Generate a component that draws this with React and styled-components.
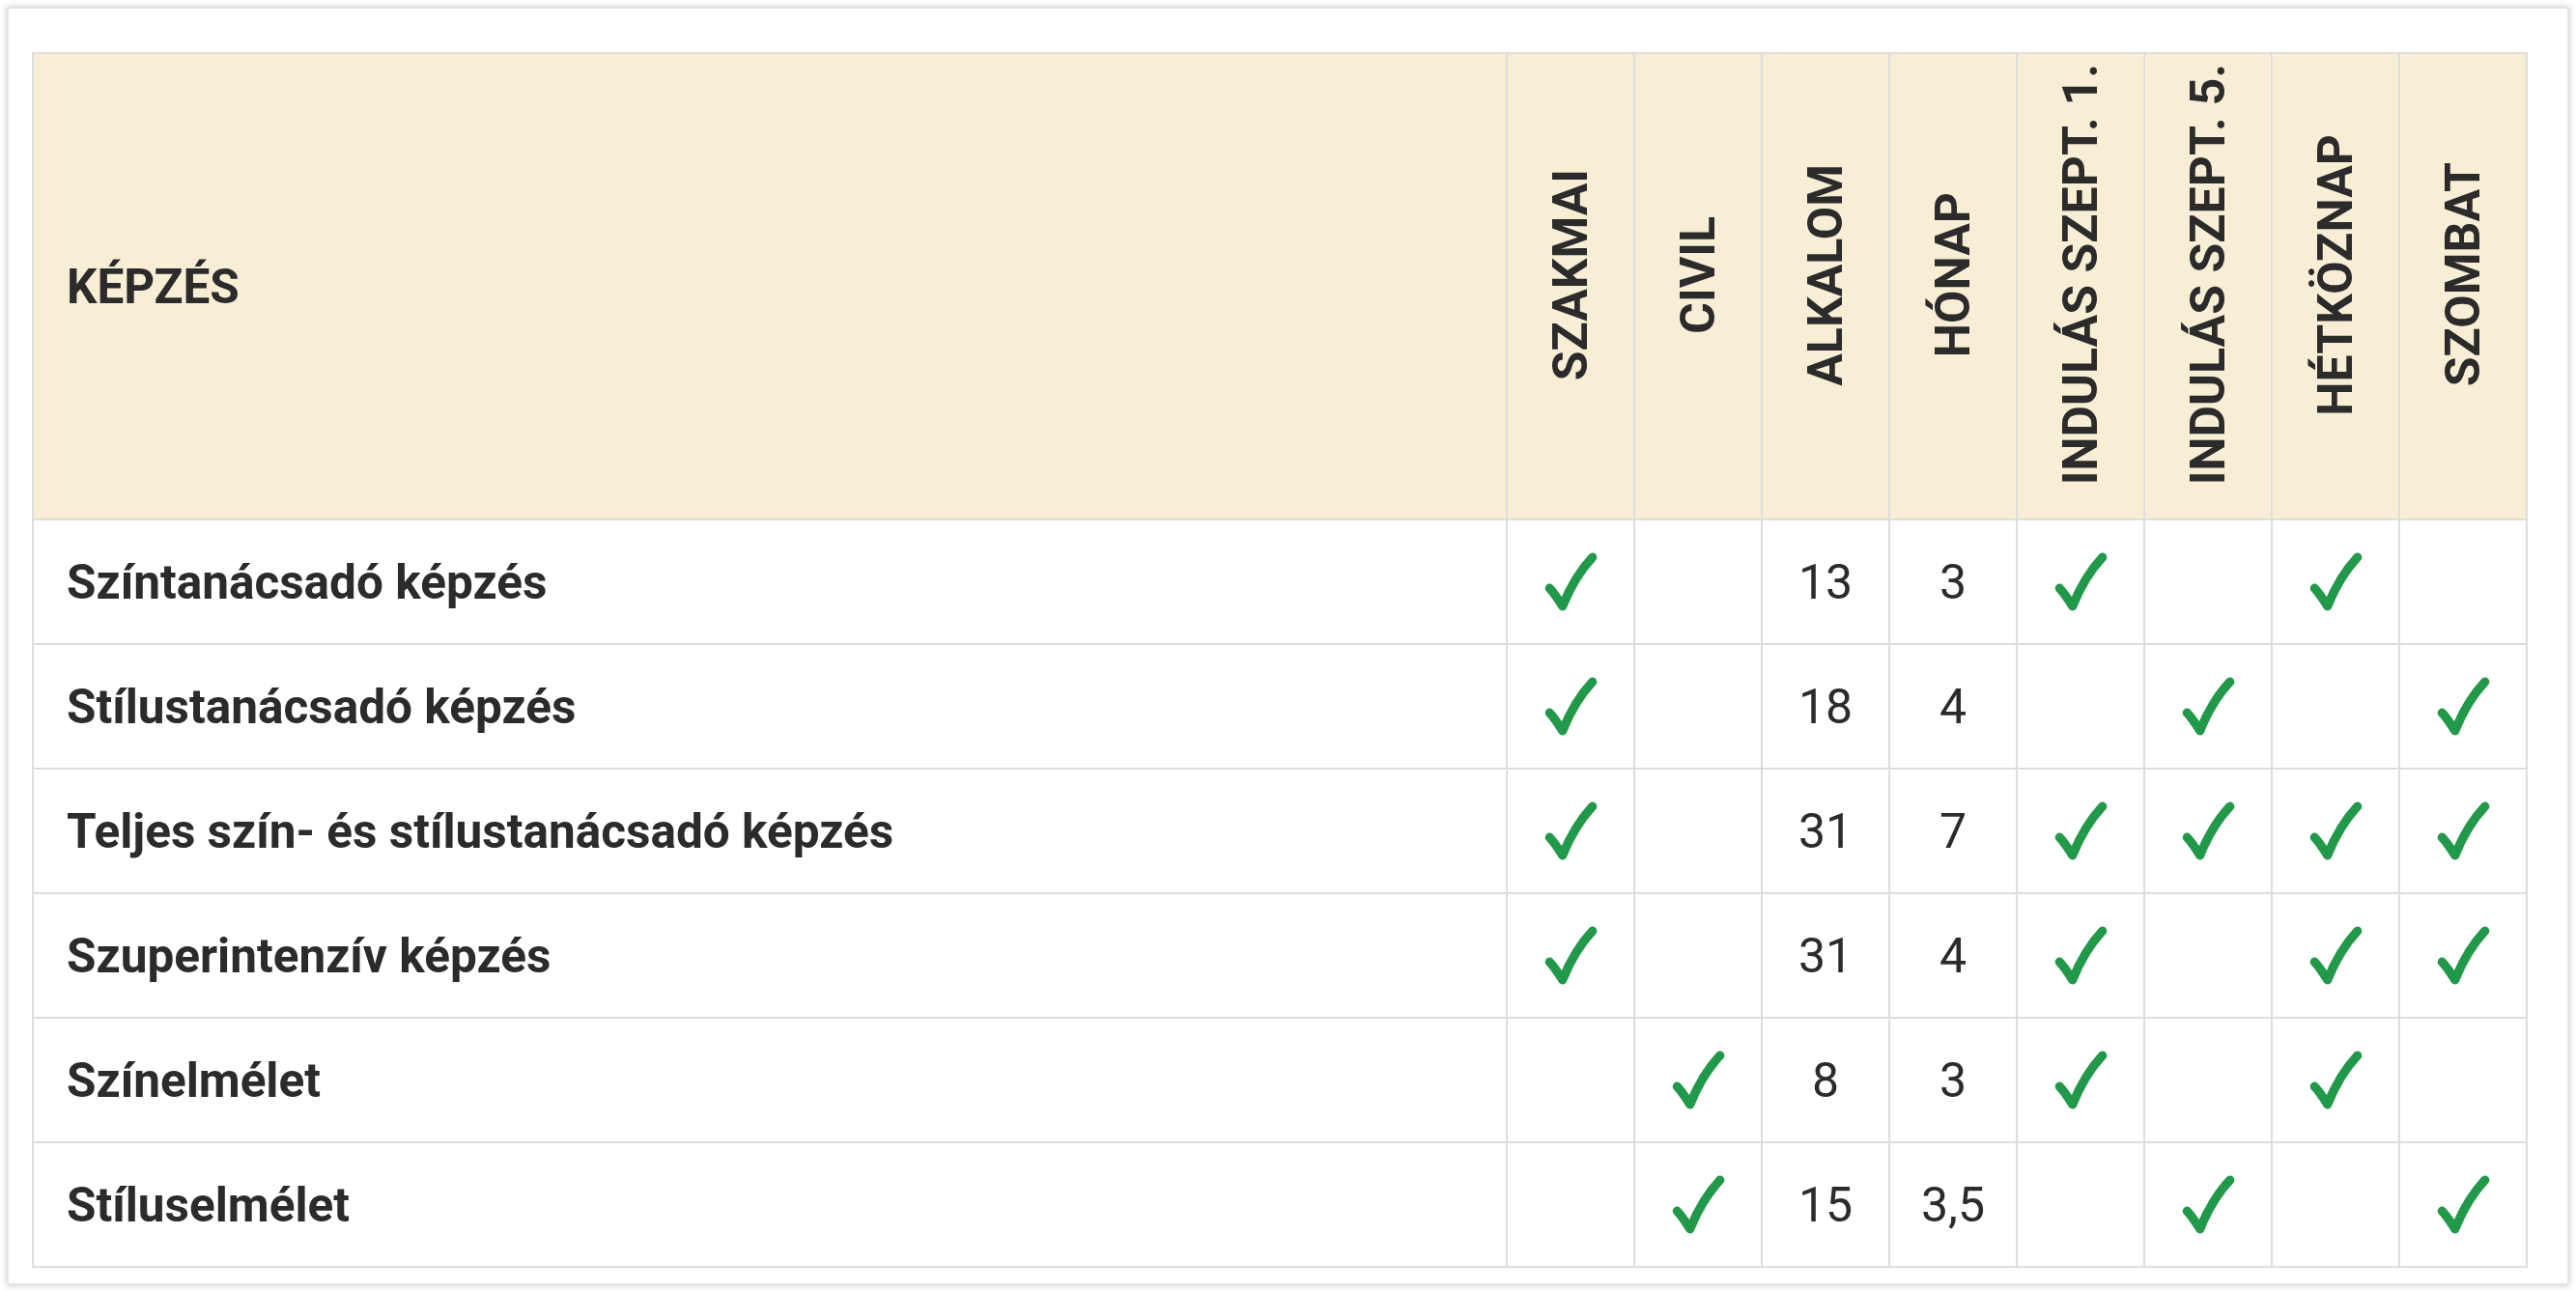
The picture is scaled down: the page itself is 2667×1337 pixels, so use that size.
import styled, { createGlobalStyle } from "styled-components";

const GlobalStyle = createGlobalStyle`
    html, body {
        background: #ffffff;
    }
    body {
        margin: 0;
        padding: 8px;
        font-family: Roboto, "Liberation Sans", sans-serif;
        color: #2b2b2b;
    }
`

const Card = styled.div`
    background: #ffffff;
    border: 1px solid #e4e4e4;
    box-shadow: 0 0 6px 2px rgba(0, 0, 0, 0.16);
    padding: 45px 41px 16px 24px;
`

const Table = styled.table`
    width: 100%;
    border-collapse: collapse;
    table-layout: fixed;
`

const HeadRow = styled.tr`
    background: #f7eed5;
    height: 483px;
`

const TitleHead = styled.th`
    border: 2px solid #dddddd;
    text-align: left;
    vertical-align: middle;
    padding: 0 34px;
    font-family: Roboto, sans-serif;
    font-weight: 700;
    font-size: 49.5px;
    color: #2b2b2b;
`

const FlagHead = styled.th`
    width: 130px;
    border: 2px solid #dddddd;
    vertical-align: middle;
    padding: 0 0 20px;
    text-align: center;
`

const VerticalLabel = styled.span`
    display: inline-block;
    writing-mode: vertical-rl;
    transform: rotate(180deg);
    white-space: nowrap;
    font-family: Roboto, sans-serif;
    font-weight: 700;
    font-size: 50px;
    line-height: 1;
    color: #2b2b2b;
`

const BodyRow = styled.tr`
    height: 129px;
`

const NameCell = styled.td`
    border: 2px solid #dddddd;
    padding: 0 34px;
    vertical-align: middle;
    font-family: Roboto, sans-serif;
    font-weight: 700;
    font-size: 49.5px;
    color: #2b2b2b;
    white-space: nowrap;
`

const ValueCell = styled.td`
    border: 2px solid #dddddd;
    text-align: center;
    vertical-align: middle;
    padding: 0;
    font-family: Roboto, sans-serif;
    font-weight: 400;
    font-size: 50px;
    color: #2b2b2b;
`

const CheckMark = () => (
    <svg width="56" height="64" viewBox="0 0 54 62" style={{ display: "block", margin: "0 auto" }}>
        <path
            d="M6 37 C10 41 14 47 19 55 C25 40 35 21 49 6"
            fill="none"
            stroke="#22984a"
            strokeWidth="9"
            strokeLinecap="round"
            strokeLinejoin="round"
        />
    </svg>
)

const columns = ["SZAKMAI", "CIVIL", "ALKALOM", "HÓNAP", "INDULÁS SZEPT. 1.", "INDULÁS SZEPT. 5.", "HÉTKÖZNAP", "SZOMBAT"]

const Y = true
const N = false

const rows = [
    { name: "Színtanácsadó képzés", cells: [Y, N, "13", "3", Y, N, Y, N] },
    { name: "Stílustanácsadó képzés", cells: [Y, N, "18", "4", N, Y, N, Y] },
    { name: "Teljes szín- és stílustanácsadó képzés", cells: [Y, N, "31", "7", Y, Y, Y, Y] },
    { name: "Szuperintenzív képzés", cells: [Y, N, "31", "4", Y, N, Y, Y] },
    { name: "Színelmélet", cells: [N, Y, "8", "3", Y, N, Y, N] },
    { name: "Stíluselmélet", cells: [N, Y, "15", "3,5", N, Y, N, Y] },
]

function App() {
    return (
        <>
            <GlobalStyle />
            <Card>
                <Table>
                    <thead>
                        <HeadRow>
                            <TitleHead>KÉPZÉS</TitleHead>
                            {columns.map(c => (
                                <FlagHead key={c}>
                                    <VerticalLabel>{c}</VerticalLabel>
                                </FlagHead>
                            ))}
                        </HeadRow>
                    </thead>
                    <tbody>
                        {rows.map(r => (
                            <BodyRow key={r.name}>
                                <NameCell>{r.name}</NameCell>
                                {r.cells.map((v, i) => (
                                    <ValueCell key={i}>
                                        {v === true ? <CheckMark /> : v === false ? null : v}
                                    </ValueCell>
                                ))}
                            </BodyRow>
                        ))}
                    </tbody>
                </Table>
            </Card>
        </>
    )
}

export default App
